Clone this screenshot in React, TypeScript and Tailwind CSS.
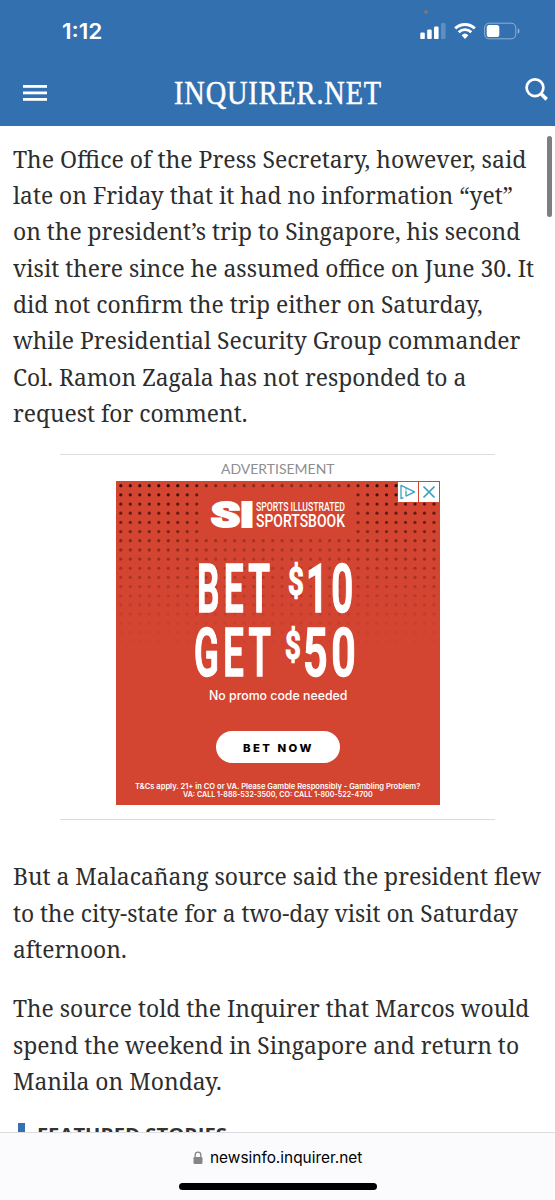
import { useLayoutEffect, useRef, useState } from 'react';
import type { ReactNode } from 'react';

type FitProps = {
  width: number;
  className?: string;
  children: ReactNode;
};

// One line of text, stretched or squeezed to an exact width
function Fit({ width, className = '', children }: FitProps) {
  const ref = useRef<HTMLSpanElement>(null);
  const [scale, setScale] = useState(1);

  useLayoutEffect(() => {
    if (ref.current) setScale(width / ref.current.offsetWidth);
  }, [width]);

  return (
    <span className={`block whitespace-nowrap ${className}`} style={{ width }}>
      <span ref={ref} className="inline-block origin-left" style={{ transform: `scaleX(${scale})` }}>
        {children}
      </span>
    </span>
  );
}

type Line = [text: string, width: number];

const INTRO: Line[] = [
  ['The Office of the Press Secretary, however, said', 513],
  ['late on Friday that it had no information “yet”', 500],
  ['on the president’s trip to Singapore, his second', 507],
  ['visit there since he assumed office on June 30. It', 521],
  ['did not confirm the trip either on Saturday,', 470],
  ['while Presidential Security Group commander', 507],
  ['Col. Ramon Zagala has not responded to a', 453],
  ['request for comment.', 234],
];

const MALACANANG: Line[] = [
  ['But a Malacañang source said the president flew', 528],
  ['to the city-state for a two-day visit on Saturday', 505],
  ['afternoon.', 114],
];

const WEEKEND: Line[] = [
  ['The source told the Inquirer that Marcos would', 516],
  ['spend the weekend in Singapore and return to', 506],
  ['Manila on Monday.', 209],
];

function Paragraph({ lines }: { lines: Line[] }) {
  return (
    <p className="font-['Noto_Serif','DejaVu_Serif_Condensed','DejaVu_Serif',serif] text-[24.2px] leading-[36.35px] text-[#2d2d2d]">
      {lines.map(([text, width]) => (
        <Fit key={text} width={width}>
          {text}
        </Fit>
      ))}
    </p>
  );
}

function StatusIcons() {
  return (
    <svg width="100" height="18" viewBox="0 0 100 18" fill="#fff">
      <rect x="0.3" y="10.6" width="4.5" height="6.5" rx="1.2" />
      <rect x="7.2" y="7.6" width="4.5" height="9.5" rx="1.2" />
      <rect x="14" y="4.6" width="4.6" height="12.5" rx="1.2" />
      <rect x="21" y="1" width="4.6" height="16.1" rx="1.2" opacity="0.22" />
      <g fill="none" stroke="#fff" strokeWidth="2.9">
        <path d="M35.2 6.4a14.2 14.2 0 0 1 19.6 0" />
        <path d="M38.7 10.2a9 9 0 0 1 12.6 0" />
      </g>
      <path d="M41.6 13.2a5 5 0 0 1 6.8 0L45 16.9z" />
      <rect x="64.6" y="1.2" width="31.2" height="15.6" rx="4.4" fill="none" stroke="#fff" strokeOpacity="0.45" />
      <rect x="66.7" y="2.9" width="12.6" height="12.2" rx="2.6" />
      <path d="M97.8 6.3c2.2 1 2.2 4.6 0 5.6z" opacity="0.5" />
    </svg>
  );
}

function Header() {
  return (
    <header className="relative h-[125.5px] bg-[#3370b0]">
      <i className="absolute left-[424px] top-[10px] size-[4px] rounded-full bg-[#80766f]" />
      <div className="flex h-[62px] items-center justify-between pl-[62px] pr-[35px]">
        <Fit width={40} className="font-['Inter',sans-serif] text-[21.5px] font-semibold leading-[64px] text-white">
          1:12
        </Fit>
        <StatusIcons />
      </div>
      <div className="flex h-[63px] items-center pl-[23px]">
        <svg className="mb-[1px]" width="24" height="16" viewBox="0 0 24 16" fill="#fff">
          <rect y="0" width="24" height="2.8" />
          <rect y="6.5" width="24" height="2.8" />
          <rect y="13" width="24" height="2.8" />
        </svg>
        <Fit
          width={208}
          className="ml-[127px] font-['Liberation_Serif',serif] text-[33px] leading-[61px] tracking-[1px] text-white [-webkit-text-stroke:0.5px_white]"
        >
          INQUIRER.NET
        </Fit>
        <svg className="mb-[9px] ml-auto mr-[6px]" width="25" height="25" viewBox="0 0 25 25" fill="none" stroke="#fff">
          <circle cx="11" cy="10.7" r="8.4" strokeWidth="2.7" />
          <path d="M17 16.8l5.7 5.6" strokeWidth="3.6" />
        </svg>
      </div>
    </header>
  );
}

const DOTS = Array.from({ length: 18 * 34 }, (_, i) => {
  const col = i % 34;
  const row = Math.floor(i / 34);
  const x = 4.8 + col * 9.49;
  const y = 4.7 + row * 9.17;
  const fromCenter = Math.abs(x - 162);
  const edge = Math.max(0, Math.min(1, (fromCenter - 55) / 45));
  const behindLogo = row > 0 && row < 6 && fromCenter < 72;
  const opacity = behindLogo ? 0 : (0.4 + 0.5 * edge * (1 - row / 14)) * (1 - row / 18);
  return { x, y, opacity };
});

type OfferProps = {
  word: string;
  wordWidth: number;
  gap: string;
  amount: string;
  amountWidth: number;
};

function Offer({ word, wordWidth, gap, amount, amountWidth }: OfferProps) {
  return (
    <div className="flex h-[63.4px] font-['Roboto',sans-serif] text-[67px] font-semibold leading-[63.4px] [-webkit-text-stroke:1.5px_white]">
      <Fit width={wordWidth} className="tracking-[8px]">
        {word}
      </Fit>
      <Fit width={16} className={`-mt-[7px] mr-[2px] text-[38px] ${gap}`}>
        $
      </Fit>
      <Fit width={amountWidth} className="tracking-[6px]">
        {amount}
      </Fit>
    </div>
  );
}

function Advert() {
  return (
    <section className="mx-[60px] mt-[23px] flex h-[365.5px] flex-col items-center border-y-[1.5px] border-[#dcdcdc]">
      <Fit width={114} className="mt-[3px] font-['Lato',sans-serif] text-[13px] leading-[23px] text-[#8e8e8e]">
        ADVERTISEMENT
      </Fit>
      <div className="relative flex h-[324px] w-[324px] flex-col items-center overflow-hidden bg-[#d34431] text-white">
        <svg className="absolute inset-0" width="324" height="324" viewBox="0 0 324 324">
          {DOTS.map((dot, i) => (
            <circle key={i} cx={dot.x} cy={dot.y} r="1.6" fill="#200808" opacity={dot.opacity} />
          ))}
        </svg>
        <div className="absolute right-[1px] top-[1px] flex gap-[1px]">
          <svg width="20" height="20" viewBox="0 0 20 20" fill="none" stroke="#3a9fc4" strokeWidth="1.3">
            <rect width="20" height="20" fill="#fff" stroke="none" />
            <path d="M5.4 15.6L3 16.6V3.4l13.6 6.4-8.6 4.4" strokeLinejoin="round" />
            <path d="M8 8.8v5.4M8 6.6v1.2" />
          </svg>
          <svg width="20" height="20" viewBox="0 0 20 20" fill="none" stroke="#3a9fc4" strokeWidth="1.7">
            <rect width="20" height="20" fill="#fff" stroke="none" />
            <path d="M4.5 4.5l11 11M15.5 4.5l-11 11" />
          </svg>
        </div>

        <div className="relative mt-[20px] flex h-[28px] items-center gap-[2px]">
          <Fit
            width={43}
            className="font-['Roboto',sans-serif] text-[34.5px] font-black leading-[28px] [-webkit-text-stroke:2.2px_white]"
          >
            SI
          </Fit>
          <div className="font-['Roboto',sans-serif] font-medium">
            <Fit width={89} className="text-[12px] leading-[12px]">
              SPORTS ILLUSTRATED
            </Fit>
            <Fit width={89} className="text-[18.5px] leading-[16px]">
              SPORTSBOOK
            </Fit>
          </div>
        </div>

        <div className="relative mr-[2px] mt-[29px] flex flex-col items-center">
          <Offer word="BET" wordWidth={77} gap="ml-[14px]" amount="10" amountWidth={51} />
          <Offer word="GET" wordWidth={81} gap="ml-[10px]" amount="50" amountWidth={57} />
        </div>

        <Fit width={138} className="relative mt-px font-['Inter',sans-serif] text-[12.5px] leading-[20px] font-medium">
          No promo code needed
        </Fit>
        <button
          type="button"
          className="relative mt-[25px] flex h-[32px] w-[124px] shrink-0 items-center justify-center rounded-full bg-white pt-[3px] text-black"
        >
          <Fit width={71} className="font-['Inter',sans-serif] text-[11px] font-extrabold tracking-[2.4px]">
            BET NOW
          </Fit>
        </button>
        <div className="relative mt-[20px] flex flex-col items-center font-['Inter',sans-serif] text-[7.4px] font-semibold leading-[8px]">
          <Fit width={285}>T&amp;Cs apply. 21+ in CO or VA. Please Gamble Responsibly - Gambling Problem?</Fit>
          <Fit width={190}>VA: CALL 1-888-532-3500, CO: CALL 1-800-522-4700</Fit>
        </div>
      </div>
    </section>
  );
}

function BrowserBar() {
  return (
    <footer className="h-[68px] shrink-0 border-t border-[#dcdde0] bg-[#fbfbfd]">
      <div className="flex h-[50px] items-center justify-center gap-[7px]">
        <svg width="10" height="14" viewBox="0 0 10 14">
          <rect x="0.5" y="6" width="9" height="7" rx="1.2" fill="#858589" />
          <path d="M2.2 6.5V4a2.8 2.8 0 0 1 5.6 0v2.5" fill="none" stroke="#858589" strokeWidth="1.3" />
        </svg>
        <Fit width={152} className="pt-px font-['Inter',sans-serif] text-[15px] text-black">
          newsinfo.inquirer.net
        </Fit>
      </div>
      <div className="mx-auto h-[7px] w-[198px] rounded-full bg-black" />
    </footer>
  );
}

export default function App() {
  return (
    <div className="relative flex h-[1200px] w-[555px] flex-col overflow-hidden bg-white">
      <Header />
      <i className="absolute left-[547px] top-[136px] h-[81px] w-[4.5px] rounded-full bg-[#7e7e7e]" />
      <main className="min-h-0 flex-1 overflow-hidden pt-[15px]">
        <div className="pl-[13px]">
          <Paragraph lines={INTRO} />
        </div>
        <Advert />
        <div className="mt-[38.7px] space-y-[23px] pl-[13px]">
          <Paragraph lines={MALACANANG} />
          <Paragraph lines={WEEKEND} />
        </div>
        <div className="ml-[18px] mt-[23.8px] flex h-[30px] gap-[12px]">
          <span className="w-[7px] bg-[#3370b0]" />
          <Fit width={190} className="font-['Open_Sans',sans-serif] text-[18px] font-bold leading-[23px] text-[#333]">
            FEATURED STORIES
          </Fit>
        </div>
      </main>
      <BrowserBar />
    </div>
  );
}
